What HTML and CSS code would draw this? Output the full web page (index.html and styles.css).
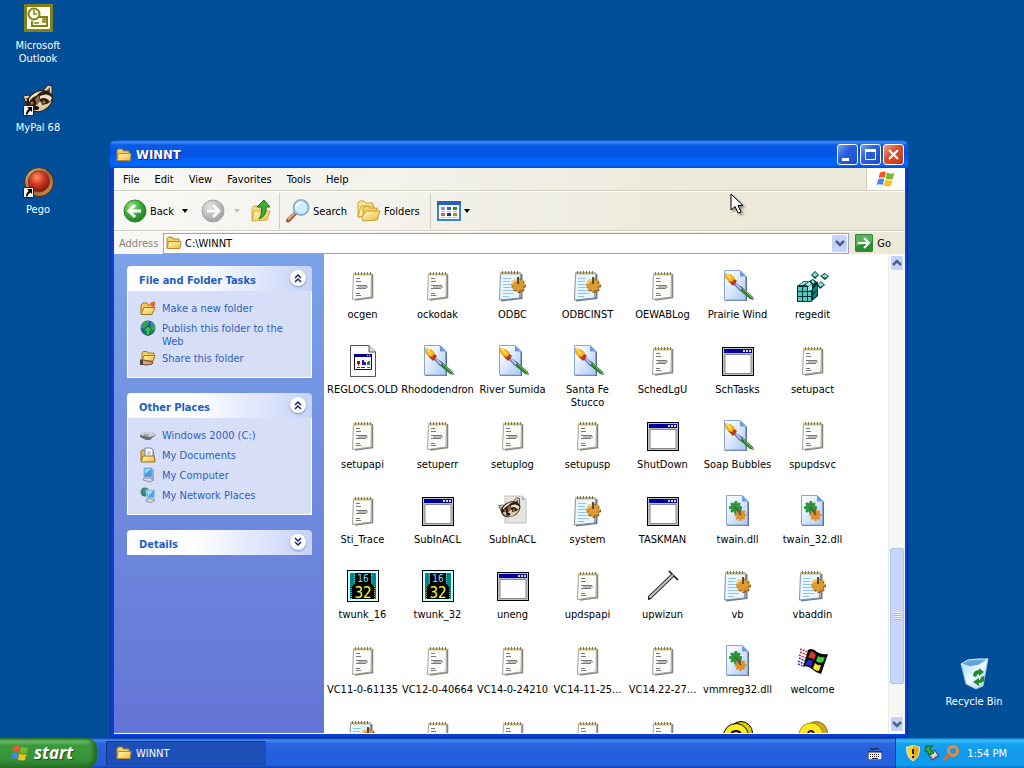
FILE: index.html
```html
<!DOCTYPE html>
<html lang="en">
<head>
    <meta charset="UTF-8">
    <meta name="viewport" content="width=device-width, initial-scale=1.0">
    <title>WINNT</title>
    <link rel="stylesheet" href="styles.css">
</head>
<body>
    <svg class="sprites" aria-hidden="true">
        <defs>
            <linearGradient id="gFolder" x1="0" y1="0" x2="1" y2="1"><stop offset="0" stop-color="#fff9b8"/><stop offset="1" stop-color="#efb941"/></linearGradient>
            <linearGradient id="gPage" x1="0" y1="0" x2="1" y2="1"><stop offset="0" stop-color="#fff"/><stop offset=".4" stop-color="#e4effd"/><stop offset="1" stop-color="#a9c6f3"/></linearGradient>
            <radialGradient id="gGreen" cx=".35" cy=".3" r=".8"><stop offset="0" stop-color="#a4e38a"/><stop offset=".5" stop-color="#3fa93a"/><stop offset="1" stop-color="#17751b"/></radialGradient>
            <radialGradient id="gGray" cx=".35" cy=".3" r=".8"><stop offset="0" stop-color="#e3e3e3"/><stop offset=".6" stop-color="#b6b6b6"/><stop offset="1" stop-color="#9b9b9b"/></radialGradient>
            <radialGradient id="gRed" cx=".4" cy=".3" r=".75"><stop offset="0" stop-color="#ff8f6c"/><stop offset=".45" stop-color="#d43a20"/><stop offset="1" stop-color="#780f06"/></radialGradient>
            <linearGradient id="gBrass" x1="0" y1="0" x2="1" y2="1"><stop offset="0" stop-color="#d8c08c"/><stop offset=".5" stop-color="#9d5f34"/><stop offset="1" stop-color="#d79a50"/></linearGradient>
            <linearGradient id="gBin" x1="0" y1="0" x2="1" y2="1"><stop offset="0" stop-color="#8fd6f5"/><stop offset=".5" stop-color="#eefaff"/><stop offset="1" stop-color="#a6cbe0"/></linearGradient>
        </defs>

        <symbol id="folder" viewBox="0 0 16 16">
            <path d="M1 13V3.5L2.5 2H6l1.5 2H13v3" fill="#f4cf63" stroke="#b08425"/>
            <path d="M1 13.5L2.5 6.5H15L14 13.5Z" fill="url(#gFolder)" stroke="#b98c28"/>
        </symbol>
        <symbol id="flag" viewBox="0 0 20 18">
            <path d="M4 2.5Q7 .5 10 2.2L8.6 8Q5.5 6.6 2.5 8.2Z" fill="#ee5a28"/>
            <path d="M11 2.6Q14.5 4.6 18.3 3L16.8 8.8Q13 10.3 9.7 8.4Z" fill="#77b92c"/>
            <path d="M2.2 9.3Q5.3 7.8 8.3 9.2L6.8 15Q3.8 13.5 .7 15Z" fill="#4686ea"/>
            <path d="M9.4 9.6Q12.8 11.5 16.5 10L15 15.8Q11.3 17.3 7.9 15.4Z" fill="#f6c022"/>
        </symbol>
        <symbol id="shortcut" viewBox="0 0 11 11">
            <path d="M.5 .5h10v10H.5Z" fill="#fff" stroke="#222"/>
            <path d="M4 2h5v5L7.5 5.6Q5 7 4.5 9.5H2.8Q2.8 6 5.7 3.7Z" fill="#000"/>
        </symbol>
        <symbol id="notepad" viewBox="0 0 32 32">
            <path d="M8 30L25.5 27.500V4" fill="none" stroke="#85857c" stroke-width="1.5"/>
            <path d="M6.5 4H24.5L24 27L5.5 29.5Z" fill="#fbfbf8" stroke="#a3a39a"/>
            <path d="M6 3H25V5.500H6Z" fill="#cfc08a"/>
            <path d="M8.500 2V5M11.500 2V5M14.500 2V5M17.500 2V5M20.500 2V5M23.500 2V5" stroke="#857a50"/>
            <path d="M9 8.500H13M9 11.500H14M9 15.500H20M9 18.500H19M11 17H21M9 23.500H13M9 25.500H14" stroke="#74797f"/>
        </symbol>
        <symbol id="gear" viewBox="0 0 16 16">
            <path d="M7 0h3l.5 3 2-1.5 2 2L13 6l3 .5v3l-3 .5 1.500 2.500-2 2L10 13l-.5 3h-3L6 13l-2.500 1.500-2-2L3 10 0 9.500v-3L3 6 1.500 3.500l2-2L6 3Z"/>
        </symbol>
        <symbol id="ini" viewBox="0 0 32 32">
            <path d="M4 30.500L24.500 28V4" fill="none" stroke="#6c7a88" stroke-width="2"/>
            <path d="M3.500 3.500H23.500L22.500 28L2.500 30Z" fill="#e9f6ff" stroke="#7d93a8"/>
            <path d="M3 2H24V4.500H3Z" fill="#c3b88f"/>
            <path d="M5.500 1V4M8.500 1V4M11.500 1V4M14.500 1V4M17.500 1V4M20.500 1V4" stroke="#776f50"/>
            <path d="M6 8.500H14M6 11.500H13M6 14.500H14M6 17.500H18M6 20.500H19M6 23.500H17M6 26.500H12" stroke="#8fc6e8"/>
            <use href="#gear" x="14" y="9" width="16" height="14" fill="#8a5514"/>
            <use href="#gear" x="13" y="8" width="16" height="14" fill="#dd9a30"/>
            <path d="M15 13Q18 9 22 11" fill="none" stroke="#f7cd78" stroke-width="2"/>
            <path d="M21 7V14" stroke="#5b4a33" stroke-width="2"/>
        </symbol>
        <symbol id="page" viewBox="0 0 32 32">
            <path d="M5 1H21L27 7V31H5Z" fill="#5a7096"/>
            <path d="M4.500 .5H20L25.500 6.500V30H4.500Z" fill="url(#gPage)" stroke="#87a6d6"/>
            <path d="M20 .5V6.500H25.500Z" fill="#6c9be0"/>
        </symbol>
        <symbol id="bitmap" viewBox="0 0 32 32">
            <use href="#page" x="-2" width="32" height="32"/>
            <path d="M19 16L31 27L32 30L28 29L16 19Z" fill="#2f7d31"/>
            <path d="M21 19L31 29" stroke="#7fc070"/>
            <path d="M13 12L21 18L18 21L11 14Z" fill="#6d78b8"/>
            <path d="M14 14L19 19" stroke="#c3cbf2" stroke-width="1.5"/>
            <path d="M10 7L15 11L11 16L6 11Z" fill="#bb3a10"/>
            <path d="M3 3Q11 4 13 8L10 12L6 11Q2 8 3 3Z" fill="#f6b21c"/>
            <path d="M5 4L9 9" stroke="#ffe985" stroke-width="1.5"/>
        </symbol>
        <symbol id="dll" viewBox="0 0 32 32">
            <use href="#page" width="32" height="32"/>
            <use href="#gear" x="7" y="6" width="13" height="13" fill="#2d963a"/>
            <use href="#gear" x="12" y="14" width="13" height="12" fill="#e0902a"/>
            <path d="M13 12L19 20M18 14V20" stroke="#525a48" stroke-width="1.5"/>
        </symbol>
        <symbol id="app" viewBox="0 0 32 32">
            <path d="M0 2H32V31H0Z" fill="#000"/>
            <path d="M1 3H31V30H1Z" fill="#c0c0c0"/>
            <path d="M2 4H30V8H2Z" fill="#0000a0"/>
            <path d="M3 9.500H29V28.500H3Z" fill="#fff" stroke="#888"/>
            <path d="M21 5h2v2h-2zM24 5h2v2h-2zM27 5h2v2h-2z" fill="#ddd"/>
        </symbol>
        <symbol id="oldfile" viewBox="0 0 32 32">
            <path d="M3.500 .5H22L28.500 7V31.500H3.500Z" fill="#fff" stroke="#555"/>
            <path d="M22 .5V7H28.500" fill="#ddd" stroke="#555"/>
            <path d="M7.500 9.500H24.500V24.500H7.500Z" fill="#fff" stroke="#111"/>
            <path d="M7 9H25V12H7Z" fill="#000090"/>
            <path d="M20 10h1v1h-1zM22 10h1v1h-1z" fill="#fff"/>
            <path d="M10 16h3v3h-1v2h-1v-2h-1zM10 22h3v1h-3z" fill="#a01020"/>
            <path d="M15 15h2v2h2v3h-4zM14 22h4v1h-4z" fill="#2020b8"/>
            <path d="M20 17h1v-1h2v4h-3zM20 22h3v1h-3z" fill="#16835a"/>
        </symbol>
        <symbol id="regedit" viewBox="0 0 32 32">
            <path d="M0 16L7 11L21 12V26L14 32H0Z" fill="#033"/>
            <path d="M1 17h4v4H1zM6 17h4v4H6zM1 22h4v4H1zM6 22h4v4H6zM1 27h4v4H1zM6 27h4v4H6zM11 27h3v4h-3zM11 22h3v4h-3z" fill="#54c8c1"/>
            <path d="M2 15L7 12H11L6 15ZM8 15L12 12H16L12 16ZM11 17L15 14V20L11 21Z" fill="#a2f2ec"/>
            <path d="M16 19L20 15V20L16 23ZM16 25L20 21V25L16 29Z" fill="#128080"/>
            <path d="M14 5L18 1L22 5L18 9ZM23 6L27.500 3L32 6L28 10ZM20 15L24 11L28 15L23 19ZM12 11L16 9L20 12L16 16Z" fill="#033"/>
            <path d="M15 5L18 2L21 5L18 7ZM24 6L28 4L31 6L28 8ZM21 14L24 12L27 15L23 17ZM14 11L16 10L18 12L16 14Z" fill="#7fe0da"/>
        </symbol>
        <symbol id="raccoon" viewBox="0 0 32 32">
            <path d="M20 8L26 1L30 2L30 14ZM1 12L7 11L12 17L5 21Z" fill="#e3d5b8" stroke="#2f2117"/>
            <path d="M24 7L28 3L28 11ZM3 14L7 14L8 18Z" fill="#6b5138"/>
            <path d="M4 18Q8 8 18 6Q27 5 31 12Q32 19 26 24Q20 29 12 28Q4 26 4 18Z" fill="#2b1d14"/>
            <path d="M7 15Q12 7 21 7Q16 9 14 12Q10 13 7 18ZM18 12Q26 8 30 14L28 18Q24 12 18 15Z" fill="#ecdfc4"/>
            <path d="M6 22Q10 19 13 23L16 18Q20 16 20 21Q26 20 30 17Q26 25 18 27Q10 28 6 22Z" fill="#dccbab"/>
            <path d="M13 15L17 11L18 17L15 21Z" fill="#8b6d4d"/>
            <ellipse cx="14" cy="24" rx="3" ry="2" fill="#111"/>
            <circle cx="10" cy="19" r="1.5" fill="#b77a32"/><circle cx="22" cy="18" r="1.5" fill="#b77a32"/>
        </symbol>
        <symbol id="raccoonPage" viewBox="0 0 32 32">
            <path d="M8 1H25L29 5V28H8Z" fill="#e6e4e2" stroke="#c2c0be"/>
            <path d="M25 1V5H29" fill="#bcbab8"/>
            <use href="#raccoon" x="1" y="2" width="23" height="23"/>
        </symbol>
        <symbol id="twunk" viewBox="0 0 32 32">
            <path d="M0 0H32V32H0Z" fill="#000"/>
            <path d="M1 1H31V31H1Z" fill="#c8ffff"/>
            <path d="M3 3H29V29H3Z" fill="#088"/>
            <path d="M8 3H24V13L28 17V29H4V17L8 13Z" fill="#000"/>
            <path d="M7.500 3V13L4.500 17V29M24.500 3V13L27.500 17V29" fill="none" stroke="#b9a84a" stroke-dasharray="1 1"/>
        </symbol>
        <symbol id="hammer" viewBox="0 0 32 32">
            <path d="M22 1L31 10" stroke="#000" stroke-width="1.5"/>
            <path d="M2 28L26 5" stroke="#333" stroke-width="4"/>
            <path d="M2 28L26 5" stroke="#c4c4c4" stroke-width="2"/>
            <path d="M1 30L1 27L4 29Z" fill="#000"/>
        </symbol>
        <symbol id="welcome" viewBox="0 0 32 32">
            <path d="M11 5Q15 2 20 7Q25 10 31 9L24 29Q19 28 15 24Q10 20 6 22Z" fill="#080808"/>
            <path d="M14 6Q17 7 19 10L17 15Q14 12 11 13Z" fill="#d03a34"/>
            <path d="M21 11Q24 13 28 12L26 17Q22 19 19 16Z" fill="#42c93d"/>
            <path d="M11 15Q14 14 16 17L14 22Q11 19 8 20Z" fill="#2329c9"/>
            <path d="M18 18Q21 21 24 20L22 26Q18 26 16 23Z" fill="#f7e72a"/>
            <path d="M3 4L11 7M3 7L10 10M2 10L9 13" stroke="#c4343c" stroke-width="1.5" stroke-dasharray="2 1"/>
            <path d="M2 13L8 16M1 16L7 19M1 19L6 21" stroke="#3438ba" stroke-width="1.5" stroke-dasharray="2 1"/>
        </symbol>
        <symbol id="coins" viewBox="0 0 32 32">
            <circle cx="19" cy="13" r="11.5" fill="#d8d000" stroke="#000"/>
            <circle cx="14" cy="16" r="12.5" fill="#ffef20" stroke="#000"/>
            <path d="M9 16Q9 11 14 11T19 16" fill="none" stroke="#000" stroke-width="2"/>
        </symbol>
        <symbol id="help" viewBox="0 0 32 32">
            <circle cx="19" cy="13" r="11.5" fill="#c9a81c" stroke="#8a7717"/>
            <circle cx="14" cy="15" r="12" fill="#ffe81e" stroke="#a08d20"/>
            <path d="M11 15Q11 11 14 11T17 15" fill="none" stroke="#222" stroke-width="2"/>
        </symbol>
        <symbol id="outlook" viewBox="0 0 32 32">
            <path d="M2 2H31V30H2Z" fill="#83801b"/>
            <path d="M5 5H28V27H5Z" fill="#fffff0"/>
            <path d="M15 15H25V24H10V19" fill="none" stroke="#83801b" stroke-width="2"/>
            <circle cx="12" cy="12" r="5.5" fill="#fffff0" stroke="#83801b" stroke-width="2"/>
            <path d="M12 8V12H15M12 21H17M21 17H23V20H21Z" fill="none" stroke="#83801b" stroke-width="1.5"/>
        </symbol>
        <symbol id="pego" viewBox="0 0 32 32">
            <circle cx="17" cy="16" r="14.500" fill="url(#gBrass)" stroke="#4e2714"/>
            <circle cx="17" cy="15.500" r="10.500" fill="url(#gRed)" stroke="#7a3a20"/>
        </symbol>
        <symbol id="bin" viewBox="0 0 32 32">
            <path d="M3 6L12 8L21 3L30 1L25 28L18 31L8 26Z" fill="url(#gBin)" stroke="#8fc3dc"/>
            <path d="M3 6L10 2L20 1L30 1L21 7L12 9Z" fill="#5ea9d4" stroke="#e6f7ff"/>
            <path d="M15 18Q15 12 21 12L21 10L26 14L21 18V16Q19 16 18 19ZM26 18Q28 25 21 25V28L15 24L21 20V22Q23 22 23 19Z" fill="#1f8c2d"/>
        </symbol>
        <symbol id="newfolder" viewBox="0 0 16 16">
            <path d="M1 14L1 5L3 3H7L8 5H13V8" fill="#f3c84e" stroke="#a57619"/>
            <path d="M1 14.500L4 7.500H15L12 14.500Z" fill="url(#gFolder)" stroke="#a57619"/>
            <path d="M10 3L15 1V6L12 7Z" fill="#e6622a"/>
        </symbol>
        <symbol id="globe" viewBox="0 0 16 16">
            <circle cx="8" cy="8" r="7.500" fill="#2563a8"/>
            <path d="M2 4Q5 0 9 1L8 5L4 8L1 8ZM11 2Q15 4 15 9L12 13L9 11L11 7Z" fill="#3ba345"/>
            <path d="M8 6L13 11H10V15H6V11H3Z" fill="#35c04a" stroke="#0e6a26"/>
        </symbol>
        <symbol id="share" viewBox="0 0 16 16">
            <path d="M2 10V3L3 1.500H7L8 3H14V9" fill="#f4cf63" stroke="#a57c22"/>
            <path d="M2 11L4 5.500H15L13 11Z" fill="url(#gFolder)" stroke="#a57c22"/>
            <path d="M0 10H4L8 11L13 12L12 14L6 15L0 14Z" fill="#d9a57c" stroke="#684028"/>
            <path d="M0 10H3V15H0Z" fill="#51433f"/>
        </symbol>
        <symbol id="drive" viewBox="0 0 16 16">
            <path d="M0 8L5 5H12L16 8L10 13H6L0 10Z" fill="#6e7076"/>
            <path d="M0 8L5 5H12L16 8L10 10Z" fill="#cfd0d4"/>
            <path d="M4 8H9" stroke="#77797f"/>
            <path d="M12 11L14 9" stroke="#51d04d"/>
        </symbol>
        <symbol id="docs" viewBox="0 0 16 16">
            <path d="M1 14V4L3 3H13L15 14Z" fill="#e8b94c" stroke="#9a731f"/>
            <path d="M5 1H11L13 3V11H5Z" fill="#fff" stroke="#6d86b5"/>
            <path d="M7 5H11M7 7H11" stroke="#8aa4d6"/>
            <path d="M1 15L3 9H14L15 15Z" fill="url(#gFolder)" stroke="#9a731f"/>
        </symbol>
        <symbol id="computer" viewBox="0 0 16 16">
            <path d="M11 2H14V14H11Z" fill="#9aa9ba"/>
            <path d="M4 1L12 1L12 10L4 10Z" fill="#3f9de8" stroke="#9bb3ca"/>
            <path d="M5 2L11 2L5 7Z" fill="#94dcfa"/>
            <path d="M4 11H10L13 13L10 15L3 13Z" fill="#dadfe6" stroke="#8995a2"/>
        </symbol>
        <symbol id="network" viewBox="0 0 16 16">
            <circle cx="5" cy="5" r="4.500" fill="#2b8f4d"/>
            <path d="M2 3L6 2L7 5L3 7Z" fill="#3f7fc9"/>
            <path d="M6 3L15 3L14.500 11L7 11Z" fill="#4aa9ee" stroke="#b9cbdc"/>
            <path d="M7 4L13 4L8 9Z" fill="#a2e3fb"/>
            <path d="M7 12L11 12L15 13L11 15.500L6 14Z" fill="#dfe4ea" stroke="#8390a0"/>
        </symbol>
        <symbol id="back" viewBox="0 0 24 24">
            <circle cx="12" cy="12" r="11" fill="url(#gGreen)" stroke="#2c8a2e"/>
            <path d="M12 6L6 12L12 18M6.500 12H18" fill="none" stroke="#fff" stroke-width="3"/>
        </symbol>
        <symbol id="forward" viewBox="0 0 24 24">
            <circle cx="12" cy="12" r="11" fill="url(#gGray)" stroke="#a5a5a5"/>
            <path d="M12 6L18 12L12 18M17.500 12H6" fill="none" stroke="#f7f7f7" stroke-width="3"/>
        </symbol>
        <symbol id="up" viewBox="0 0 24 24">
            <path d="M3 21V9L5 7H9L11 9H17V12" fill="#f7dc79" stroke="#cdaa4a"/>
            <path d="M3 22L5 12H21L18 21Z" fill="url(#gFolder)" stroke="#cdaa4a"/>
            <path d="M10 20Q13 17 12.500 8H8L15 1L21 8H17Q18 17 10 20Z" fill="#3fae35" stroke="#1b7021"/>
        </symbol>
        <symbol id="search" viewBox="0 0 24 24">
            <path d="M2 21.500L9 14.500" stroke="#9a5e42" stroke-width="4" stroke-linecap="round"/>
            <path d="M2 20.500L9 13.500" stroke="#e3a887" stroke-width="2"/>
            <circle cx="15" cy="8.500" r="7.500" fill="#cdeefb" stroke="#8fb0d6" stroke-width="2"/>
            <path d="M10 8Q11 4 16 3" fill="none" stroke="#fff" stroke-width="2"/>
        </symbol>
        <symbol id="folders" viewBox="0 0 24 24">
            <path d="M1 18V4L3 2H7L9 4H16V16Z" fill="#fbe694" stroke="#cda137"/>
            <path d="M1 18L4 7H17L15 16Z" fill="#fff0a0" stroke="#cda137"/>
            <path d="M6 20V9L8 7H11L13 9H20V14" fill="#f6d266" stroke="#c69a30"/>
            <path d="M5 18L9 12H23L20 21L6 22Z" fill="url(#gFolder)" stroke="#c69a30"/>
        </symbol>
        <symbol id="views" viewBox="0 0 24 20">
            <path d="M1 1H23V19H1Z" fill="#fff" stroke="#3b82c4" stroke-width="2"/>
            <path d="M0 0H24V4H0Z" fill="#2462bd"/>
            <path d="M4 6h4v3H4z" fill="#7b98de"/><path d="M10 6h4v3h-4z" fill="#3667c6"/><path d="M16 6h4v3h-4z" fill="#2e8f33"/>
            <path d="M4 12h4v3H4z" fill="#e0603c"/><path d="M10 12h4v3h-4z" fill="#1c3a8a"/><path d="M16 12h4v3h-4z" fill="#ba8a26"/>
            <path d="M4 10.500h4M10 10.500h4M16 10.500h4M4 16.500h4M10 16.500h4M16 16.500h4" stroke="#bbb"/>
        </symbol>
        <symbol id="go" viewBox="0 0 18 18">
            <path d="M1 0H17L18 1V17L17 18H1L0 17V1Z" fill="#2b8c34"/>
            <path d="M1 1H17V8L1 12Z" fill="#5cb15c"/>
            <path d="M3 9H14M9 4L14 9L9 14" fill="none" stroke="#fff" stroke-width="2"/>
        </symbol>
        <symbol id="chevUp" viewBox="0 0 10 10"><path d="M2 5L5 2L8 5M2 9L5 6L8 9" fill="none" stroke="currentColor" stroke-width="1.5"/></symbol>
        <symbol id="chevDown" viewBox="0 0 10 10"><path d="M2 1L5 4L8 1M2 5L5 8L8 5" fill="none" stroke="currentColor" stroke-width="1.5"/></symbol>
        <symbol id="arrowUp" viewBox="0 0 10 10"><path d="M1 7L5 3L9 7" fill="none" stroke="#4d6185" stroke-width="2.5"/></symbol>
        <symbol id="arrowDown" viewBox="0 0 10 10"><path d="M1 3L5 7L9 3" fill="none" stroke="#4d6185" stroke-width="2.5"/></symbol>
        <symbol id="caret" viewBox="0 0 6 4"><path d="M0 0H6L3 4Z" fill="currentColor"/></symbol>
        <symbol id="keyboard" viewBox="0 0 14 12">
            <path d="M2 0Q4 2 6 1T11 1" fill="none" stroke="#111"/>
            <path d="M0 4H14V12H0Z" fill="#f4f4f4" stroke="#111"/>
            <path d="M2 6.500H12M2 8.500H12" stroke="#222" stroke-dasharray="1 1"/><path d="M4 10.500H10" stroke="#222"/>
        </symbol>
        <symbol id="shield" viewBox="0 0 16 16">
            <path d="M8 0Q11 2 14.500 2Q15 12 8 16Q1 12 1.500 2Q5 2 8 0Z" fill="#f7d32c" stroke="#e6e3cf"/>
            <path d="M8 1V15Q14 11 14 2.500Q11 2.500 8 1Z" fill="#e1a81b"/>
            <path d="M8 4V9M8 11V13" stroke="#222" stroke-width="2"/>
        </symbol>
        <symbol id="eject" viewBox="0 0 16 16">
            <path d="M4 9L11 5L15 11L8 15Z" fill="#8f9aa6" stroke="#3d464e"/>
            <path d="M7 10L11 7L13 10L9 13Z" fill="#d5dde4"/>
            <path d="M2 1L9 1L6 4L10 8L5 10L3 6L1 7Z" fill="#2fa13d" stroke="#11622a"/>
        </symbol>
        <symbol id="finder" viewBox="0 0 16 16">
            <circle cx="10" cy="6" r="4.500" fill="none" stroke="#f08a3c" stroke-width="3"/>
            <path d="M7 9L1 15" stroke="#e46a24" stroke-width="3"/>
        </symbol>
    </svg>

    <main class="desktop">
        <button class="shortcut outlook"><svg class="icon32"><use href="#outlook"/></svg><span>Microsoft Outlook</span></button>
        <button class="shortcut mypal"><svg class="icon32"><use href="#raccoon"/></svg><svg class="overlay"><use href="#shortcut"/></svg><span>MyPal 68</span></button>
        <button class="shortcut pego"><svg class="icon32"><use href="#pego"/></svg><svg class="overlay"><use href="#shortcut"/></svg><span>Pego</span></button>
        <button class="shortcut recycle"><svg class="icon32"><use href="#bin"/></svg><span>Recycle Bin</span></button>

        <section class="window">
            <header class="titlebar">
                <svg class="icon16"><use href="#folder"/></svg>
                <h1>WINNT</h1>
                <button class="winbtn" aria-label="Minimize"><svg viewBox="0 0 19 19"><path d="M4 13H11V16H4Z" fill="#fff"/></svg></button>
                <button class="winbtn" aria-label="Maximize"><svg viewBox="0 0 19 19"><path d="M4.500 5H14.500V14.500H4.500Z" fill="none" stroke="#fff"/><path d="M4 4H15V7H4Z" fill="#fff"/></svg></button>
                <button class="winbtn close" aria-label="Close"><svg viewBox="0 0 19 19"><path d="M5 5L14 14M14 5L5 14" stroke="#fff" stroke-width="2"/></svg></button>
            </header>

            <div class="client">
                <nav class="menubar">
                    <button>File</button><button>Edit</button><button>View</button><button>Favorites</button><button>Tools</button><button>Help</button>
                    <div class="throbber"><svg><use href="#flag"/></svg></div>
                </nav>

                <div class="toolbar">
                    <button class="tool back"><svg class="icon24"><use href="#back"/></svg>Back<svg class="caret"><use href="#caret"/></svg></button>
                    <button class="tool forward" aria-label="Forward" disabled><svg class="icon24"><use href="#forward"/></svg><svg class="caret"><use href="#caret"/></svg></button>
                    <button class="tool up" aria-label="Up"><svg class="icon24"><use href="#up"/></svg></button>
                    <i class="sep"></i>
                    <button class="tool search"><svg class="icon24"><use href="#search"/></svg>Search</button>
                    <button class="tool folders"><svg class="icon24"><use href="#folders"/></svg>Folders</button>
                    <i class="sep"></i>
                    <button class="tool views" aria-label="Views"><svg class="icon24"><use href="#views"/></svg><svg class="caret"><use href="#caret"/></svg></button>
                </div>

                <form class="addressbar" onsubmit="return false">
                    <label for="address">Address</label>
                    <div class="field">
                        <svg class="icon16"><use href="#folder"/></svg>
                        <input type="text" id="address" value="C:\WINNT">
                        <button type="button" class="drop" aria-label="Show addresses"><svg><use href="#arrowDown"/></svg></button>
                    </div>
                    <button class="go"><svg><use href="#go"/></svg>Go</button>
                </form>

                <div class="content">
                    <aside class="sidebar">
                        <section class="panel">
                            <header><h2>File and Folder Tasks</h2><button class="fold" aria-label="Collapse tasks"><svg><use href="#chevUp"/></svg></button></header>
                            <ul>
                                <li><svg class="icon16"><use href="#newfolder"/></svg><a href="#">Make a new folder</a></li>
                                <li><svg class="icon16"><use href="#globe"/></svg><a href="#">Publish this folder to the Web</a></li>
                                <li><svg class="icon16"><use href="#share"/></svg><a href="#">Share this folder</a></li>
                            </ul>
                        </section>
                        <section class="panel">
                            <header><h2>Other Places</h2><button class="fold" aria-label="Collapse places"><svg><use href="#chevUp"/></svg></button></header>
                            <ul>
                                <li><svg class="icon16"><use href="#drive"/></svg><a href="#">Windows 2000 (C:)</a></li>
                                <li><svg class="icon16"><use href="#docs"/></svg><a href="#">My Documents</a></li>
                                <li><svg class="icon16"><use href="#computer"/></svg><a href="#">My Computer</a></li>
                                <li><svg class="icon16"><use href="#network"/></svg><a href="#">My Network Places</a></li>
                            </ul>
                        </section>
                        <section class="panel">
                            <header><h2>Details</h2><button class="fold" aria-label="Expand details"><svg><use href="#chevDown"/></svg></button></header>
                        </section>
                    </aside>
                    <div class="files" id="files"></div>
                    <div class="scrollbar">
                        <button aria-label="Scroll up"><svg><use href="#arrowUp"/></svg></button>
                        <div class="track"><div class="thumb"><i></i></div></div>
                        <button aria-label="Scroll down"><svg><use href="#arrowDown"/></svg></button>
                    </div>
                </div>
            </div>
        </section>

        <svg class="cursor" viewBox="0 0 14 22"><path d="M1 1V17L5 13.500L8 20L11 19L8 12.500H13Z" fill="#fff" stroke="#000"/></svg>
    </main>

    <footer class="taskbar">
        <button class="start"><svg><use href="#flag"/></svg>start</button>
        <button class="task"><svg class="icon16"><use href="#folder"/></svg>WINNT</button>
        <svg class="keyboard"><use href="#keyboard"/></svg>
        <div class="tray">
            <svg class="icon16"><use href="#shield"/></svg>
            <svg class="icon16"><use href="#eject"/></svg>
            <svg class="icon16"><use href="#finder"/></svg>
            <time>1:54 PM</time>
        </div>
    </footer>

    <script>
        const files = [
            ['notepad', 'ocgen'], ['notepad', 'ockodak'], ['ini', 'ODBC'], ['ini', 'ODBCINST'], ['notepad', 'OEWABLog'], ['bitmap', 'Prairie Wind'], ['regedit', 'regedit'],
            ['oldfile', 'REGLOCS.OLD'], ['bitmap', 'Rhododendron'], ['bitmap', 'River Sumida'], ['bitmap', 'Santa Fe Stucco'], ['notepad', 'SchedLgU'], ['app', 'SchTasks'], ['notepad', 'setupact'],
            ['notepad', 'setupapi'], ['notepad', 'setuperr'], ['notepad', 'setuplog'], ['notepad', 'setupusp'], ['app', 'ShutDown'], ['bitmap', 'Soap Bubbles'], ['notepad', 'spupdsvc'],
            ['notepad', 'Sti_Trace'], ['app', 'SubInACL'], ['raccoonPage', 'SubInACL'], ['ini', 'system'], ['app', 'TASKMAN'], ['dll', 'twain.dll'], ['dll', 'twain_32.dll'],
            ['twunk', 'twunk_16'], ['twunk', 'twunk_32'], ['app', 'uneng'], ['notepad', 'updspapi'], ['hammer', 'upwizun'], ['ini', 'vb'], ['ini', 'vbaddin'],
            ['notepad', 'VC11-0-61135'], ['notepad', 'VC12-0-40664'], ['notepad', 'VC14-0-24210'], ['notepad', 'VC14-11-25...'], ['notepad', 'VC14.22-27...'], ['dll', 'vmmreg32.dll'], ['welcome', 'welcome'],
            ['ini', ''], ['notepad', ''], ['notepad', ''], ['notepad', ''], ['notepad', ''], ['coins', ''], ['help', '']
        ];
        const digits = '<text x="16" y="12" class="twunk-top">16</text><text x="16" y="28" class="twunk-bottom">32</text>';

        document.getElementById('files').innerHTML = files.map(function (file) {
            const extra = file[0] === 'twunk' ? digits : '';
            return '<div class="file"><svg class="icon32"><use href="#' + file[0] + '"/>' + extra + '</svg><span>' + file[1] + '</span></div>';
        }).join('');
    </script>
</body>
</html>
```
FILE: styles.css
```css
* {
    box-sizing: border-box;
}
body {
    display: flex;
    flex-direction: column;
    height: 100vh;
    margin: 0;
    overflow: hidden;
    background-color: #004e98;
    color: #000;
    font-family: 'DejaVu Sans Condensed', 'DejaVu Sans', sans-serif;
    font-size: 11px;
    line-height: 13px;
    cursor: default;
}
button, input {
    margin: 0;
    padding: 0;
    border: none;
    background: none;
    color: inherit;
    font: inherit;
}
svg {
    display: block;
    flex: none;
}
h1, h2, ul {
    margin: 0;
    padding: 0;
}
.sprites {
    position: absolute;
    width: 0;
    height: 0;
}
.icon16 {
    width: 16px;
    height: 16px;
}
.icon24 {
    width: 24px;
    height: 24px;
}
.icon32 {
    width: 32px;
    height: 32px;
}
.caret {
    width: 6px;
    height: 4px;
}
.twunk-top {
    fill: #7fdcff;
    font-size: 10px;
    text-anchor: middle;
}
.twunk-bottom {
    fill: #ffff30;
    font-size: 15px;
    text-anchor: middle;
}

/* desktop */
.desktop {
    position: relative;
    flex: 1;
    min-height: 0;
}
.shortcut {
    position: absolute;
    display: flex;
    flex-direction: column;
    align-items: center;
    gap: 5px;
    width: 76px;
    color: #fff;
}
.outlook {
    left: 0;
    top: 2px;
}
.mypal {
    left: 0;
    top: 84px;
}
.pego {
    left: 0;
    top: 166px;
}
.recycle {
    right: 12px;
    bottom: 30px;
}
.overlay {
    position: absolute;
    left: 23px;
    top: 21px;
    width: 11px;
    height: 11px;
}
.cursor {
    position: absolute;
    left: 730px;
    top: 193px;
    width: 14px;
    height: 22px;
    filter: drop-shadow(2px 2px 1px rgba(0, 0, 0, 0.4));
}

/* window */
.window {
    position: absolute;
    left: 110px;
    right: 116px;
    top: 140px;
    bottom: 0;
    display: flex;
    flex-direction: column;
    padding: 0 3px 4px 4px;
    border-radius: 6px 6px 0 0;
    background-color: #0a3fd2;
    box-shadow: inset 1px 0 #0b2fae, inset -1px 0 #0b2596, inset 0 -1px #0b2596;
}
.titlebar {
    display: flex;
    align-items: center;
    gap: 2px;
    flex: none;
    height: 28px;
    margin: 0 -3px 0 -4px;
    padding: 1px 4px 0 6px;
    border-radius: 6px 6px 0 0;
    background: linear-gradient(#0a50c8, #3c8cf5 8%, #0a5be6 18%, #0353e0 50%, #0265fc 75%, #0266ff 90%, #0348d0);
}
.titlebar h1 {
    flex: 1;
    padding-left: 2px;
    color: #fff;
    font-size: 13px;
    line-height: 16px;
    text-shadow: 1px 1px #0a1e8c;
}
.winbtn {
    width: 21px;
    height: 21px;
    border: 1px solid #fff;
    border-radius: 3px;
    background: linear-gradient(135deg, #7ba4f4, #2a5fe0 40%, #2257d4 75%, #1a47b8);
}
.winbtn.close {
    background: linear-gradient(135deg, #f0a088, #dd5234 40%, #d1401e 75%, #a9300f);
}
.client {
    display: flex;
    flex-direction: column;
    flex: 1;
    min-height: 0;
    background: linear-gradient(90deg, #f8f8f6, #f2f1ea 40%, #ece9d8 80%);
}
.menubar {
    display: flex;
    align-items: center;
    gap: 15px;
    flex: none;
    height: 23px;
    padding-left: 9px;
    border-bottom: 1px solid #d3d0c1;
}
.throbber {
    display: flex;
    align-items: center;
    justify-content: center;
    align-self: stretch;
    width: 39px;
    margin-left: auto;
    border-left: 1px solid #d3d0c1;
    background-color: #fff;
}
.throbber svg {
    width: 20px;
    height: 18px;
}
.toolbar {
    display: flex;
    align-items: center;
    flex: none;
    height: 40px;
    padding-left: 9px;
    border-top: 1px solid #fff;
    border-bottom: 1px solid #d3d0c1;
}
.tool {
    display: flex;
    align-items: center;
    gap: 3px;
}
.back .caret {
    margin-left: 5px;
}
.forward {
    gap: 9px;
    margin-left: 13px;
    color: #c5c2b6;
}
.up {
    margin-left: 9px;
}
.search {
    margin-right: 10px;
}
.folders {
    margin-right: 4px;
}
.sep {
    width: 1px;
    height: 36px;
    margin: 0 6px;
    background-color: #d0cdbf;
}
.addressbar {
    display: flex;
    align-items: center;
    flex: none;
    height: 23px;
    padding: 1px 14px 1px 5px;
    border-top: 1px solid #fff;
}
.addressbar label {
    width: 44px;
    color: #85847e;
}
.field {
    display: flex;
    align-items: center;
    flex: 1;
    gap: 3px;
    height: 21px;
    padding: 0 1px 0 2px;
    border: 1px solid #96a5ba;
    background-color: #fff;
}
.field input {
    flex: 1;
    min-width: 0;
    outline: none;
}
.drop {
    display: flex;
    align-items: center;
    justify-content: center;
    width: 15px;
    height: 17px;
    border-radius: 2px;
    background-color: #c3d3fb;
}
.drop svg, .scrollbar svg {
    width: 10px;
    height: 10px;
}
.go {
    display: flex;
    align-items: center;
    gap: 4px;
    margin-left: 6px;
}
.go svg {
    width: 18px;
    height: 18px;
}

/* folder view */
.content {
    display: flex;
    flex: 1;
    min-height: 0;
    border-bottom: 1px solid #fff;
    background-color: #fff;
}
.sidebar {
    display: flex;
    flex-direction: column;
    gap: 15px;
    flex: none;
    width: 210px;
    padding: 12px 12px 12px 13px;
    background: linear-gradient(#7ba2e7, #6375d6);
}
.panel header {
    display: flex;
    align-items: center;
    justify-content: space-between;
    height: 25px;
    padding: 0 6px 0 12px;
    border-radius: 4px 4px 0 0;
    background: linear-gradient(90deg, #fff 35%, #c6d3f7);
}
.panel h2 {
    padding-top: 3px;
    color: #215dc6;
    font-size: 11px;
    line-height: 13px;
}
.fold {
    display: flex;
    align-items: center;
    justify-content: center;
    width: 16px;
    height: 16px;
    margin-bottom: 2px;
    border-radius: 50%;
    background-color: #fff;
    box-shadow: 0 1px 2px #7c8cc4;
    color: #16246a;
}
.fold svg {
    width: 10px;
    height: 10px;
}
.panel ul {
    display: flex;
    flex-direction: column;
    gap: 4px;
    padding: 9px 12px 11px;
    border: 1px solid #fff;
    border-top: none;
    background-color: #d6dff7;
    list-style: none;
}
.panel li {
    display: flex;
    gap: 6px;
}
.panel a {
    padding-top: 2px;
    margin-bottom: -2px;
    color: #3060bc;
    text-decoration: none;
}
.files {
    display: grid;
    grid-template-columns: repeat(auto-fill, 75px);
    grid-auto-rows: 75px;
    flex: 1;
    padding-left: 1px;
    overflow: hidden;
}
.file {
    display: flex;
    flex-direction: column;
    align-items: center;
    gap: 6px;
    padding-top: 16px;
    text-align: center;
}
.scrollbar {
    display: flex;
    flex-direction: column;
    flex: none;
    width: 17px;
    padding: 1px;
    border-left: 1px solid #eeede5;
    background-color: #f6f6f2;
}
.scrollbar button {
    display: flex;
    align-items: center;
    justify-content: center;
    height: 16px;
    border: 1px solid #fff;
    border-radius: 2px;
    background-color: #c3d3fb;
}
.track {
    display: flex;
    flex-direction: column;
    flex: 1;
    justify-content: flex-end;
    padding-bottom: 32px;
}
.thumb {
    display: flex;
    align-items: center;
    justify-content: center;
    height: 33%;
    border: 1px solid #b0c4f4;
    border-radius: 2px;
    background-color: #c5d5fc;
}
.thumb i {
    width: 7px;
    height: 8px;
    background: repeating-linear-gradient(#eef4fe 0 1px, #9db5ee 1px 2px);
}

/* taskbar */
.taskbar {
    display: flex;
    align-items: center;
    flex: none;
    height: 30px;
    background: linear-gradient(#1941a5, #3f8cf3 8%, #2a66e2 18%, #245edb 60%, #2460e0 90%, #1941a5);
    color: #fff;
}
.start {
    display: flex;
    align-items: center;
    gap: 4px;
    width: 97px;
    height: 30px;
    padding-left: 10px;
    border-radius: 0 10px 10px 0;
    background: linear-gradient(#2f7a2f, #6bbb6a 10%, #3c9a3c 25%, #379337 70%, #2b742b);
    box-shadow: inset -3px 0 4px #226322;
    font-family: 'Open Sans', sans-serif;
    font-size: 17px;
    font-style: italic;
    font-weight: bold;
    line-height: 24px;
    text-shadow: 1px 1px 1px #1c4d1c;
}
.start svg {
    width: 20px;
    height: 18px;
}
.task {
    display: flex;
    align-items: center;
    gap: 4px;
    width: 160px;
    height: 25px;
    margin-left: 9px;
    padding-left: 10px;
    border-radius: 2px;
    background-color: #1e4fb8;
    box-shadow: inset 1px 1px 1px #14377f;
}
.keyboard {
    width: 14px;
    height: 12px;
    margin: 2px 13px 0 auto;
}
.tray {
    display: flex;
    align-items: center;
    gap: 3px;
    height: 30px;
    padding: 0 17px 0 9px;
    border-left: 1px solid #0b4a9e;
    background: linear-gradient(#0d70c4, #3ac0f8 8%, #16a0ee 20%, #1198ea 60%, #129ef0 90%, #0d70c4);
}
.tray time {
    margin-left: 5px;
}
```
